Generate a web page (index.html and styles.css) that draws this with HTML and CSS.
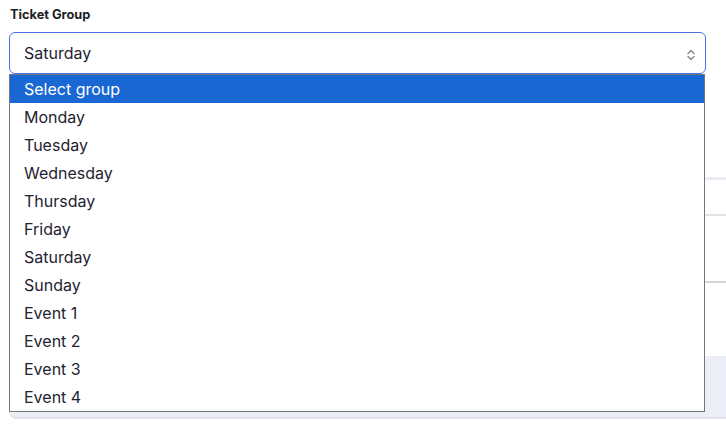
FILE: index.html
```html
<!DOCTYPE html>
<html>
<head>
<meta charset="utf-8">
<link rel="stylesheet" href="styles.css">
</head>
<body>
<div class="page">
  <label class="label">Ticket Group</label>
  <div class="field">
    <div class="select">
      <span>Saturday</span>
      <svg class="chev" width="10" height="14" viewBox="0 0 10 14"><path d="M2 5.5 L5 2.5 L8 5.5 M2 8.5 L5 11.5 L8 8.5" fill="none" stroke="#8a8f9c" stroke-width="1.5" stroke-linecap="round" stroke-linejoin="round"/></svg>
    </div>
    <ul class="menu">
      <li class="active">Select group</li>
      <li>Monday</li>
      <li>Tuesday</li>
      <li>Wednesday</li>
      <li>Thursday</li>
      <li>Friday</li>
      <li>Saturday</li>
      <li>Sunday</li>
      <li>Event 1</li>
      <li>Event 2</li>
      <li>Event 3</li>
      <li>Event 4</li>
    </ul>
  </div>
  <div class="behind">
    <div class="band"></div>
    <div class="row r1"></div>
    <div class="row r2"></div>
    <div class="spacer"></div>
    <div class="card"></div>
  </div>
</div>
</body>
</html>
```
FILE: styles.css
```css
html, body { margin: 0; padding: 0; background: #fff; }
body { font-family: Inter, "Noto Sans", sans-serif; color: #1f2330; overflow: hidden; }
.page { padding: 7px 0 0 9px; display: flex; flex-direction: column; }
.label { font-size: 12.8px; font-weight: 700; color: #1d1f24; margin-left: 1px; line-height: 16px; }
.field { position: relative; margin-top: 9px; width: 697px; }
.select {
  box-sizing: border-box; height: 42px; border: 1px solid #4f6fe8; border-radius: 6px;
  display: flex; align-items: center; justify-content: space-between;
  padding: 0 9px 0 14px; font-size: 16px; color: #1f2330; background: #fff;
}
.chev { display: block; margin-top: 3px; }
.menu {
  position: absolute; left: 0; top: 42px; margin: 0; padding: 0; list-style: none;
  width: 696px; box-sizing: border-box; border: 1px solid #767676; background: #fff; z-index: 2;
}
.menu li { height: 28px; line-height: 28px; padding-left: 14px; font-size: 16px; color: #1f2330; }
.menu li.active { background: #1967d2; color: #fff; }
.behind { display: flex; flex-direction: column; margin-right: 0; }
.band { margin-top: 103px; height: 3px; background: linear-gradient(#f1f1f6, #e6e6ef); }
.row { border-bottom: 2px solid #e3e3e6; }
.r1 { height: 34px; }
.r2 { height: 65px; border-bottom-color: #d6d6da; }
.spacer { height: 73px; }
.card { height: 61px; background: #eceff8; border-bottom: 2px solid #dfe2ec; border-radius: 0 0 0 8px; }
```
